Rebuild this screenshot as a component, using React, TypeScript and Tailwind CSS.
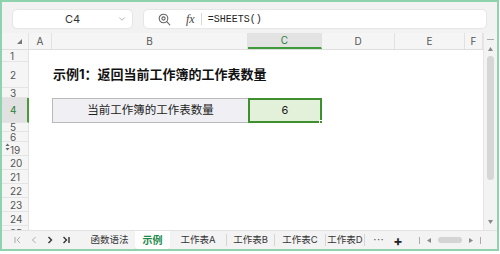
import { ChevronDown } from 'lucide-react';

const FONT = "font-['Inter','Noto_Sans_CJK_SC',sans-serif]";

const rows = [
  { label: '1', h: 'h-[12px]' },
  { label: '2', h: 'h-[26px]' },
  { label: '3', h: 'h-[10px]' },
  { label: '4', h: 'h-[25px]' },
  { label: '5', h: 'h-[9px]' },
  { label: '6', h: 'h-[10px]' },
  { label: '19', h: 'h-[14px]' },
  { label: '20', h: 'h-[14px]' },
  { label: '21', h: 'h-[14px]' },
  { label: '22', h: 'h-[14px]' },
  { label: '23', h: 'h-[14px]' },
  { label: '24', h: 'h-[14px]' },
  { label: '25', h: 'h-[14px]' },
];

const cols = [
  { label: 'A', w: 'w-[23px]' },
  { label: 'B', w: 'w-[196px]' },
  { label: 'C', w: 'w-[74px]' },
  { label: 'D', w: 'w-[73px]' },
  { label: 'E', w: 'w-[70px]' },
  { label: 'F', w: 'w-[18px]' },
];

const tabs = [
  { name: '工作表A', w: 'w-[57px]' },
  { name: '工作表B', w: 'w-[48px]' },
  { name: '工作表C', w: 'w-[51px]' },
  { name: '工作表D', w: 'w-[39px]' },
];

function ZoomIcon() {
  return (
    <svg width="13" height="13" viewBox="0 0 13 13" fill="none" stroke="#666" strokeWidth="1.1">
      <circle cx="5.5" cy="5.5" r="4.3" />
      <circle cx="5.5" cy="5.5" r="1.6" />
      <path d="M8.7 8.7 L11.8 11.8" strokeLinecap="round" />
    </svg>
  );
}

function FormulaBar() {
  return (
    <div className="h-[31px] bg-[#f2f2f2] flex items-start pt-[7px] pl-[10px] gap-[10px]">
      <div className="w-[121px] h-[20px] bg-white rounded-[5px] border border-[#e6e6e6] flex items-center relative">
        <span className="absolute left-[52px] text-[11px] text-[#333]">C4</span>
        <ChevronDown className="absolute right-[5px] w-[10px] h-[10px] text-[#888]" strokeWidth={1.5} />
      </div>
      <div className="w-[344px] h-[20px] bg-white rounded-[5px] border border-[#e6e6e6] flex items-center">
        <div className="ml-[14px] flex items-center">
          <ZoomIcon />
        </div>
        <span className="ml-[15px] text-[12px] italic text-[#444] font-['Liberation_Serif',serif]">fx</span>
        <div className="ml-[6px] w-px h-[12px] bg-[#d8d8d8]" />
        <span className="ml-[6px] text-[10px] text-[#222] font-['Liberation_Mono',monospace]">=SHEETS()</span>
      </div>
    </div>
  );
}

function ColumnHeader() {
  return (
    <div className="flex h-[17px] bg-[#f5f5f5] border-b border-[#dedede]">
      <div className="w-[27px] flex items-center justify-end pr-[6px] border-r border-[#e2e2e2]">
        <svg width="5" height="5" viewBox="0 0 5 5">
          <path d="M5 0 L5 5 L0 5 Z" fill="#777" />
        </svg>
      </div>
      {cols.map(c => (
        <div
          key={c.label}
          className={`${c.w} flex items-center justify-center text-[10px] border-r border-[#e2e2e2] ${
            c.label === 'C'
              ? 'bg-[#e3e3e3] text-[#2d7f3a] border-b-2 border-b-[#3f9a3a]'
              : 'text-[#555]'
          }`}
        >
          {c.label}
        </div>
      ))}
    </div>
  );
}

function Row({ label, h }: { label: string; h: string }) {
  const active = label === '4';
  return (
    <div className={`flex ${h} shrink-0`}>
      <div
        className={`w-[27px] relative flex items-center pl-[8px] text-[10px] leading-none border-b border-[#e4e4e4] ${
          active
            ? 'bg-[#e1e1e1] text-[#2d7f3a] border-r-2 border-r-[#4a9a3a]'
            : 'bg-[#f5f5f5] text-[#555] border-r border-r-[#e2e2e2]'
        }`}
      >
        {label === '19' && (
          <svg className="absolute left-[3px] top-[1px]" width="5" height="8" viewBox="0 0 5 8">
            <path d="M2.5 0.5 L4.5 3 L0.5 3 Z" fill="#666" />
            <path d="M2.5 7.5 L4.5 5 L0.5 5 Z" fill="#666" />
          </svg>
        )}
        <span className={label === '19' ? 'mt-[3px]' : ''}>{label}</span>
      </div>
      <div className="w-[23px]" />
      {label === '2' && (
        <div className="w-[196px] flex items-center pl-px">
          <span className="text-[13px] font-bold text-[#111] whitespace-nowrap">示例1：返回当前工作簿的工作表数量</span>
        </div>
      )}
      {label === '4' && (
        <>
          <div className="w-[196px] bg-[#f0f0f4] border border-r-0 border-[#b9b9b9] flex items-center justify-center text-[11.5px] text-[#222]">
            当前工作簿的工作表数量
          </div>
          <div className="w-[74px] relative bg-[#e3f1da] border-2 border-[#3f8f2f] flex items-center justify-center text-[11px] text-[#222]">
            6
            <div className="absolute -right-[3px] -bottom-[3px] w-[4px] h-[4px] bg-[#3f8f2f] border border-white" />
          </div>
        </>
      )}
    </div>
  );
}

function VScroll() {
  return (
    <div className="w-[14px] bg-[#f3f3f3] flex flex-col items-center border-l border-[#e6e6e6]">
      <div className="mt-[6px] w-[7px] h-px bg-[#aaa]" />
      <svg className="mt-[7px]" width="5" height="4" viewBox="0 0 5 4">
        <path d="M2.5 0 L5 4 L0 4 Z" fill="#888" />
      </svg>
      <div className="mt-[5px] w-[7px] h-[124px] rounded-full bg-[#d6d6d6]" />
      <div className="flex-1" />
      <svg className="mb-[6px]" width="5" height="4" viewBox="0 0 5 4">
        <path d="M0 0 L5 0 L2.5 4 Z" fill="#888" />
      </svg>
    </div>
  );
}

function Grid() {
  return (
    <div className="flex h-[197px] overflow-hidden">
      <div className="flex flex-col w-[481px] overflow-hidden">
        <ColumnHeader />
        {rows.map(r => (
          <Row key={r.label} label={r.label} h={r.h} />
        ))}
      </div>
      <VScroll />
    </div>
  );
}

function TabBar() {
  return (
    <div className="h-[19px] bg-[#f3f3f3] border-t border-[#e2e2e2] flex items-stretch text-[9.5px] text-[#333]">
      <div className="flex items-center w-[82px] pl-[12px] gap-[8px] text-[#aaa]">
        <svg width="8" height="8" viewBox="0 0 8 8" fill="none" stroke="#aaa" strokeWidth="1">
          <path d="M1 1 V7 M6 1 L3 4 L6 7" />
        </svg>
        <svg width="8" height="8" viewBox="0 0 8 8" fill="none" stroke="#aaa" strokeWidth="1">
          <path d="M5.5 1 L2.5 4 L5.5 7" />
        </svg>
        <svg width="8" height="8" viewBox="0 0 8 8" fill="none" stroke="#333" strokeWidth="1.4">
          <path d="M2.5 1 L5.5 4 L2.5 7" />
        </svg>
        <svg width="8" height="8" viewBox="0 0 8 8" fill="none" stroke="#333" strokeWidth="1.4">
          <path d="M1.5 1 L4.5 4 L1.5 7 M7 1 V7" />
        </svg>
      </div>
      <div className="w-[51px] flex items-center justify-center">函数语法</div>
      <div className="w-[35px] bg-white flex items-center justify-center text-[#1e8a4a] font-bold text-[10px] rounded-b-[3px] shadow-[0_1px_1px_rgba(0,0,0,0.08)]">
        示例
      </div>
      {tabs.map(t => (
        <div key={t.name} className={`${t.w} flex items-center justify-center border-r border-[#d6d6d6] my-[3px]`}>
          {t.name}
        </div>
      ))}
      <div className="w-[22px] ml-[3px] flex items-center justify-center text-[#444] tracking-[1px]">···</div>
      <div className="w-[12px] ml-[2px] flex items-center justify-center text-[#222] text-[14px] font-bold">+</div>
      <div className="flex items-center ml-[15px] gap-[7px]">
        <div className="w-px h-[7px] bg-[#aaa]" />
        <svg width="4" height="5" viewBox="0 0 4 5">
          <path d="M0 2.5 L4 0 L4 5 Z" fill="#888" />
        </svg>
        <div className="w-[24px] h-[6px] rounded-full bg-[#d4d4d4]" />
        <svg width="4" height="5" viewBox="0 0 4 5">
          <path d="M4 2.5 L0 0 L0 5 Z" fill="#888" />
        </svg>
        <div className="w-px h-[7px] bg-[#aaa]" />
      </div>
    </div>
  );
}

export default function App() {
  return (
    <div className={`w-[500px] h-[254px] bg-white ${FONT}`}>
      <div className="w-[499px] h-[251px] border-2 border-[#8fd3ae] flex flex-col overflow-hidden">
        <FormulaBar />
        <Grid />
        <TabBar />
      </div>
    </div>
  );
}
